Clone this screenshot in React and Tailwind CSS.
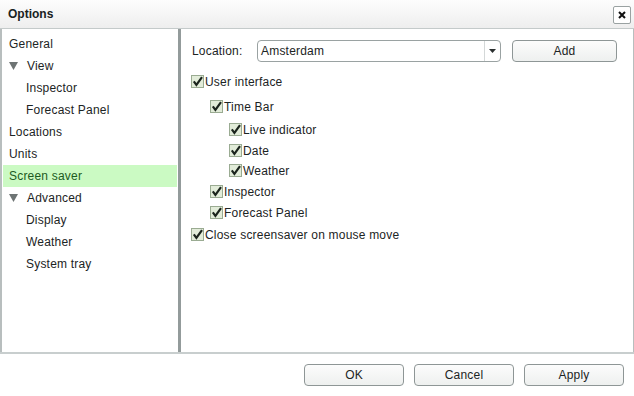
import React from 'react'

const font = { fontFamily: '"Liberation Sans", Arial, sans-serif' }

// tree entries on the left side
const tree = [
    { label: 'General', level: 0 },
    { label: 'View', level: 0, arrow: true },
    { label: 'Inspector', level: 1 },
    { label: 'Forecast Panel', level: 1 },
    { label: 'Locations', level: 0 },
    { label: 'Units', level: 0 },
    { label: 'Screen saver', level: 0, selected: true },
    { label: 'Advanced', level: 0, arrow: true },
    { label: 'Display', level: 1 },
    { label: 'Weather', level: 1 },
    { label: 'System tray', level: 1 },
]

// row heights picked so that the text lines sit where the original has them
const options = [
    { label: 'User interface', indent: 'pl-[10px]', h: 'h-[26px]' },
    { label: 'Time Bar', indent: 'pl-[29px]', h: 'h-[24px]' },
    { label: 'Live indicator', indent: 'pl-[48px]', h: 'h-[22px]' },
    { label: 'Date', indent: 'pl-[48px]', h: 'h-[20px]' },
    { label: 'Weather', indent: 'pl-[48px]', h: 'h-[20px]' },
    { label: 'Inspector', indent: 'pl-[29px]', h: 'h-[21px]' },
    { label: 'Forecast Panel', indent: 'pl-[29px]', h: 'h-[22px]' },
    { label: 'Close screensaver on mouse move', indent: 'pl-[10px]', h: 'h-[22px]' },
]

const Arrow = () => (
    <svg width="9" height="8" viewBox="0 0 9 8" className="mr-[9px]">
        <polygon points="0,0 9,0 4.5,8" fill="#6e7474" />
    </svg>
)

const CheckBox = () => (
    <svg width="14" height="14" viewBox="0 0 14 14" className="shrink-0">
        <rect x="0.5" y="0.5" width="12" height="12" fill="#e2ecd9" stroke="#9aab92" />
        <path d="M2.8 6.4 L5.4 9.8 L11 2.2" fill="none" stroke="#1b241d" strokeWidth="2.2" />
    </svg>
)

const Button = ({ children, className = '' }) => (
    <button className={`h-[22px] rounded-[4px] border border-[#8e9696] bg-gradient-to-b from-[#fcfcfc] to-[#eef0ef] text-[12px] tracking-[0.2px] text-[#1c2424] ${className}`}>
        {children}
    </button>
)

export default function App() {
    return (
        <div className="w-[634px] h-[396px] bg-white flex flex-col overflow-hidden text-[#1c2424]" style={font}>
            {/* title bar */}
            <div className="h-[29px] shrink-0 flex items-center justify-between pl-[8px] pr-[3px] bg-gradient-to-b from-[#fdfdfd] to-[#eeeeee] border-b border-[#c4caca]">
                <span className="text-[12px] font-bold text-[#1a2222]">Options</span>
                <div className="w-[18px] h-[18px] mt-[1px] border border-[#9aa2a2] rounded-[2px] bg-white flex items-center justify-center">
                    <svg width="8" height="8" viewBox="0 0 8 8">
                        <path d="M1 1 L7 7 M7 1 L1 7" stroke="#111" strokeWidth="2" />
                    </svg>
                </div>
            </div>

            {/* panels */}
            <div className="h-[325px] shrink-0 flex border-b-2 border-[#c8cece]">
                <div className="w-[181px] shrink-0 border-l-2 border-r-[3px] border-l-[#b8bebe] border-r-[#939b9b] pt-[4px] px-[1px]">
                    {tree.map((item) => (
                        <div
                            key={item.label}
                            className={`h-[22px] flex items-center text-[12px] tracking-[0.2px] ${item.selected ? 'bg-[#cbfac3] text-[#1d5a22]' : ''} ${item.level === 1 ? 'pl-[23px]' : 'pl-[6px]'}`}
                        >
                            {item.arrow && <Arrow />}
                            {item.label}
                        </div>
                    ))}
                </div>

                <div className="flex-1 border-r border-[#b8bebe] pt-[11px]">
                    <div className="flex items-center pl-[11px] h-[22px]">
                        <span className="w-[65px] text-[12px] tracking-[0.2px]">Location:</span>
                        <div className="w-[244px] h-[22px] flex border border-[#9aa2a2] rounded-[4px] bg-white">
                            <span className="flex-1 flex items-center pl-[3px] text-[12px] tracking-[0.2px]">Amsterdam</span>
                            <div className="w-[16px] border-l border-[#d4d8d8] flex items-center justify-center">
                                <svg width="7" height="4" viewBox="0 0 7 4">
                                    <polygon points="0,0 7,0 3.5,4" fill="#2a2f2f" />
                                </svg>
                            </div>
                        </div>
                        <Button className="w-[105px] ml-[11px]">Add</Button>
                    </div>

                    <div className="mt-[7px]">
                        {options.map((opt) => (
                            <div key={opt.label} className={`flex items-center ${opt.indent} ${opt.h} text-[12px] tracking-[0.2px]`}>
                                <CheckBox />
                                <span>{opt.label}</span>
                            </div>
                        ))}
                    </div>
                </div>
            </div>

            {/* footer buttons */}
            <div className="flex justify-end gap-[10px] pt-[10px] pr-[10px]">
                <Button className="w-[100px]">OK</Button>
                <Button className="w-[100px]">Cancel</Button>
                <Button className="w-[100px]">Apply</Button>
            </div>
        </div>
    )
}
